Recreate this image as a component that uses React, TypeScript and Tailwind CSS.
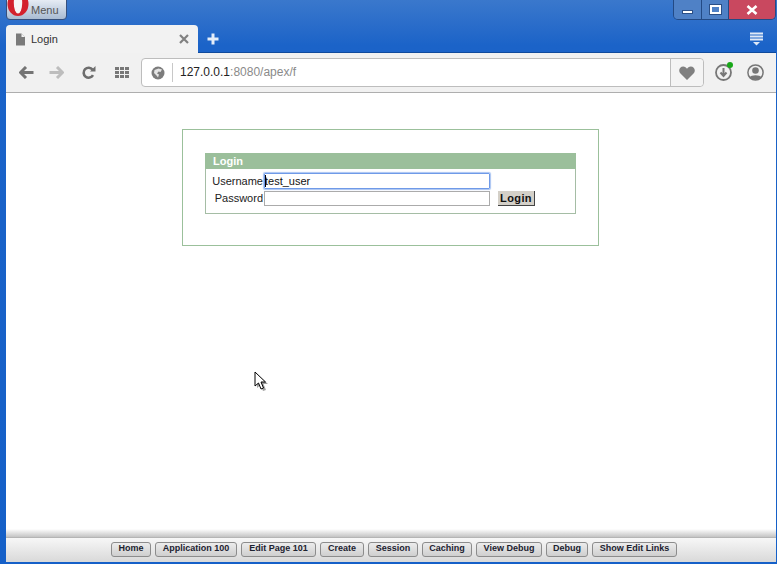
const devLinks = [
  { label: "Home", w: "w-[40px]" },
  { label: "Application 100", w: "w-[82px]" },
  { label: "Edit Page 101", w: "w-[75px]" },
  { label: "Create", w: "w-[44px]" },
  { label: "Session", w: "w-[50px]" },
  { label: "Caching", w: "w-[50px]" },
  { label: "View Debug", w: "w-[66px]" },
  { label: "Debug", w: "w-[42px]" },
  { label: "Show Edit Links", w: "w-[85px]" },
];

const OperaLogo = () => (
  <svg width="22" height="17" viewBox="0 0 22 17" className="absolute left-0 top-0">
    <ellipse cx="11" cy="4" rx="10.5" ry="12" fill="#d3212d" />
    <ellipse cx="11" cy="3" rx="4.2" ry="10.5" fill="#f6f6f6" />
  </svg>
);

const App = () => {
  return (
    <div className="w-[777px] h-[564px] flex flex-col overflow-hidden bg-gradient-to-b from-[#3a78cc] via-[#1b63c8] via-[8%] to-[#1560c8] pl-[6px] pr-[1px] pb-[2px] font-['Liberation_Sans',sans-serif]">
      {/* title bar */}
      <div className="h-[25px] flex items-start justify-between shrink-0">
        <div className="relative w-[61px] h-[21px] -mt-px rounded-b-[4px] border border-[#35507e] bg-gradient-to-b from-[#e6ecf4] to-[#a9bbd2] pl-[24px] text-[11px] leading-[21px] text-[#555]">
          <OperaLogo />
          Menu
        </div>
        <div className="w-[103px] h-[20px] flex rounded-b-[5px] border border-t-0 border-[#234a85] overflow-hidden">
          <div className="w-[28px] bg-[#4f81c6] border-r border-[#234a85] flex items-center justify-center">
            <div className="w-[11px] h-[4px] mt-[5px] bg-white border border-[#2b4f86]" />
          </div>
          <div className="w-[27px] bg-[#4f81c6] border-r border-[#234a85] flex items-center justify-center">
            <div className="w-[11px] h-[9px] border-2 border-white outline outline-1 outline-[#2b4f86]" />
          </div>
          <div className="flex-1 bg-[#c9485f] flex items-center justify-center">
            <svg width="12" height="10" viewBox="0 0 12 10">
              <path d="M1.5 1 L10.5 9 M10.5 1 L1.5 9" stroke="#fff" strokeWidth="2.6" />
            </svg>
          </div>
        </div>
      </div>

      {/* tabs */}
      <div className="h-[28px] flex shrink-0 border-b border-[#0f4a9c]">
        <div className="w-[192px] h-[28px] rounded-t-[4px] bg-[#f2f2f2] flex items-center pl-[9px] pr-[9px] text-[11px] text-[#333]">
          <svg width="11" height="13" viewBox="0 0 11 13">
            <path d="M1 0.5 H6.5 L10 4 V12.5 H1 Z" fill="#7a7a7a" />
            <path d="M6.5 0.5 V4 H10" fill="#f2f2f2" />
          </svg>
          <span className="ml-[5px] flex-1">Login</span>
          <svg width="10" height="10" viewBox="0 0 10 10">
            <path d="M1 1 L9 9 M9 1 L1 9" stroke="#808080" strokeWidth="2.2" />
          </svg>
        </div>
        <svg width="12" height="12" viewBox="0 0 12 12" className="ml-[9px] mt-[8px]">
          <path d="M6 0.5 V11.5 M0.5 6 H11.5" stroke="#e4edf9" strokeWidth="3" />
        </svg>
        <svg width="15" height="14" viewBox="0 0 15 14" className="ml-auto mr-[12px] mt-[7px]">
          <path d="M1 1.5 H14 M1 4.5 H14 M1 7.5 H14" stroke="#dfe9f7" strokeWidth="2" />
          <path d="M4 10 H11 L7.5 13.5 Z" fill="#dfe9f7" />
        </svg>
      </div>

      {/* toolbar */}
      <div className="h-[40px] flex items-center shrink-0 bg-[#f1f1f1] border-b border-[#aeaeae]">
        <svg width="15" height="13" viewBox="0 0 15 13" className="ml-[13px]">
          <path d="M7 1 L1.5 6.5 L7 12 M2 6.5 H14.5" fill="none" stroke="#747474" strokeWidth="3" />
        </svg>
        <svg width="15" height="13" viewBox="0 0 15 13" className="ml-[15px]">
          <path d="M8 1 L13.5 6.5 L8 12 M13 6.5 H0.5" fill="none" stroke="#bdbdbd" strokeWidth="3" />
        </svg>
        <svg width="14" height="14" viewBox="0 0 14 14" className="ml-[18px]">
          <path d="M11 9.2 A5 5 0 1 1 10.6 3.6" fill="none" stroke="#6e6e6e" strokeWidth="2.6" />
          <path d="M8 5.5 H13.5 V0 Z" fill="#6e6e6e" />
        </svg>
        <div className="ml-[19px] w-[14px] grid grid-cols-3 gap-[1px]">
          {Array.from({ length: 9 }).map((_, i) => (
            <div key={i} className="w-[4px] h-[3px] bg-[#777]" />
          ))}
        </div>
        <div className="ml-[12px] w-[563px] h-[29px] flex items-center bg-white border border-[#bdbdbd] rounded-[4px]">
          <svg width="14" height="14" viewBox="0 0 14 14" className="ml-[9px]">
            <circle cx="7" cy="7" r="6.5" fill="#7c7c7c" />
            <path d="M7.5 2.5 L11 3.5 L9.5 6 L7.5 5.5 L6 7.5 L8 8.5 L7 11.5 L5.5 9.5 L3 7 L3.5 4 Z" fill="#e4e4e4" />
          </svg>
          <div className="ml-[7px] w-px h-[19px] bg-[#c8c8c8]" />
          <div className="ml-[7px] flex-1 text-[12px] leading-[16px] -mt-px text-[#222]">
            127.0.0.1<span className="text-[#8a8a8a]">:8080/apex/f</span>
          </div>
          <div className="w-[33px] h-full border-l border-[#bdbdbd] bg-[#f4f4f4] rounded-r-[4px] flex items-center justify-center">
            <svg width="16" height="14" viewBox="0 0 16 14">
              <path d="M8 14 L1 7 C-1 4 1 0.5 4.2 0.5 C6 0.5 7.3 1.5 8 2.8 C8.7 1.5 10 0.5 11.8 0.5 C15 0.5 17 4 15 7 Z" fill="#808080" />
            </svg>
          </div>
        </div>
        <div className="relative ml-[11px] w-[17px] h-[17px]">
          <svg width="17" height="17" viewBox="0 0 17 17">
            <circle cx="8.5" cy="8.5" r="7.5" fill="none" stroke="#777" strokeWidth="1.8" />
            <path d="M8.5 4 V11 M5.5 8.5 L8.5 12 L11.5 8.5" fill="none" stroke="#777" strokeWidth="2" />
          </svg>
          <div className="absolute right-[-1px] top-[-2px] w-[6px] h-[6px] rounded-full bg-[#18a818]" />
        </div>
        <svg width="17" height="17" viewBox="0 0 17 17" className="ml-[15px]">
          <circle cx="8.5" cy="8.5" r="7.6" fill="none" stroke="#777" strokeWidth="1.5" />
          <circle cx="8.5" cy="6.5" r="3.3" fill="#777" />
          <path d="M2.5 13.5 C4 10.5 13 10.5 14.5 13.5 C12 16.5 5 16.5 2.5 13.5 Z" fill="#777" />
        </svg>
      </div>

      {/* page */}
      <div className="relative flex-1 bg-white pt-[36px] pl-[176px]">
        <div className="w-[417px] h-[117px] border border-[#9bc09b] pt-[23px] pl-[22px]">
          <div className="w-[371px] h-[61px] border border-t-0 border-[#a5bda5]">
            <div className="-mx-px h-[16px] bg-[#9bbf9b] pl-[8px] text-[11px] leading-[16px] font-bold text-white">
              Login
            </div>
            <div className="flex pt-[4px] text-[11px] text-[#222]">
              <div className="w-[58px] shrink-0 pr-px text-right leading-[16px] whitespace-nowrap">
                <div className="h-[17px]">Username</div>
                <div className="h-[16px]">Password</div>
              </div>
              <div className="w-[226px] shrink-0 flex flex-col gap-px">
                <div className="relative h-[16px] border border-[#6f9ae8] rounded-[1px] shadow-[0_0_1px_1px_#a9c4f2] text-[11px] leading-[14px] text-[#111]">
                  <div className="absolute left-0 top-px w-px h-[12px] bg-black" />
                  test_user
                </div>
                <div className="h-[15px] mt-px border border-[#ababab]" />
              </div>
              <div className="ml-[8px] mt-[18px] w-[37px] h-[15px] bg-[#d4d0c8] border-r border-b border-[#444] text-center text-[11px] leading-[14px] font-bold tracking-[0.4px] text-[#111]">
                Login
              </div>
            </div>
          </div>
        </div>

        {/* mouse cursor */}
        <svg width="16" height="22" viewBox="0 0 16 22" className="absolute left-[248px] top-[278px]">
          <path d="M3 3 V17 L6.5 14 L9 20 L12 19 L9.5 13 H14 Z" fill="#8a8a8a" opacity="0.8" />
          <path d="M1 1 V15 L4.5 12 L7 18 L9.5 17 L7 11 H11.5 Z" fill="#fff" stroke="#000" strokeWidth="1" />
        </svg>

        {/* shadow above the developer toolbar */}
        <div className="absolute left-0 right-0 bottom-0 h-[8px] bg-gradient-to-b from-white to-[#c4c4c4]" />
      </div>

      {/* developer toolbar */}
      <div className="h-[25px] shrink-0 bg-gradient-to-b from-[#f7f7f7] to-[#d9d9d9] border-t border-[#b5b5b5] flex items-center pl-[105px] pb-[2px] gap-[4px]">
        {devLinks.map((link) => (
          <div
            key={link.label}
            className={`${link.w} h-[15px] shrink-0 rounded-[3px] border border-[#8c8c8c] bg-gradient-to-b from-[#ececec] to-[#cfcfcf] text-center text-[9px] leading-[11px] font-bold text-[#1c2230]`}
          >
            {link.label}
          </div>
        ))}
      </div>
    </div>
  );
};

export default App;
